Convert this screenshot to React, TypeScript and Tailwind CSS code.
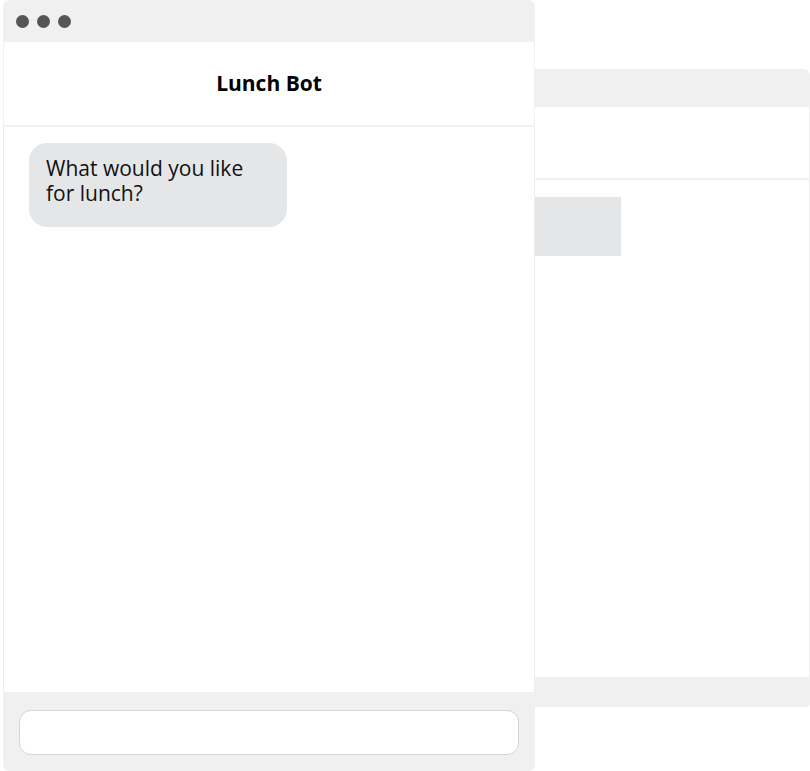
import React from "react";

export default function App() {
  return (
    <div
      className="relative w-[810px] h-[771px] bg-white overflow-hidden"
      style={{ fontFamily: '"Open Sans", "Noto Sans", sans-serif' }}
    >
      {/* Back window */}
      <div className="absolute left-[535px] top-[69px] w-[275px] h-[638px] flex flex-col z-0">
        <div className="h-[38px] bg-[#f0f0f0] rounded-tr-[6px]" />
        <div className="h-[73px] bg-white border-b-2 border-r border-[#efefef]" />
        <div className="flex-1 bg-white border-r border-[#efefef] pt-[17px]">
          <div className="w-[86px] h-[59px] bg-[#e5e6e8]" />
        </div>
        <div className="h-[30px] bg-[#f0f0f0] rounded-br-[4px]" />
      </div>

      {/* Front window */}
      <div className="absolute left-[3px] top-0 w-[532px] h-[771px] flex flex-col z-10">
        <div className="h-[42px] bg-[#f0f0f0] rounded-t-[6px] flex items-center gap-[8px] pl-[13px]">
          <span className="w-[13px] h-[13px] rounded-full bg-[#555555]" />
          <span className="w-[13px] h-[13px] rounded-full bg-[#555555]" />
          <span className="w-[13px] h-[13px] rounded-full bg-[#555555]" />
        </div>
        <div className="h-[85px] bg-white border-x border-b-2 border-[#f2f2f2] flex items-center justify-center">
          <span className="text-[21px] font-bold text-black leading-none">Lunch Bot</span>
        </div>
        <div className="flex-1 bg-white border-x border-[#eeeeee] pt-[16px] pl-[25px]">
          <div className="w-[258px] h-[84px] bg-[#e5e6e8] rounded-[18px] pl-[17px] pt-[13px] text-[21px] leading-[25px] text-[#111111]">
            What would you like
            <br />
            for lunch?
          </div>
        </div>
        <div className="h-[79px] bg-[#f0f0f0] rounded-b-[6px] px-[16px] pt-[18px]">
          <div className="h-[45px] bg-white border border-[#d4d4d4] rounded-[12px]" />
        </div>
      </div>
    </div>
  );
}
